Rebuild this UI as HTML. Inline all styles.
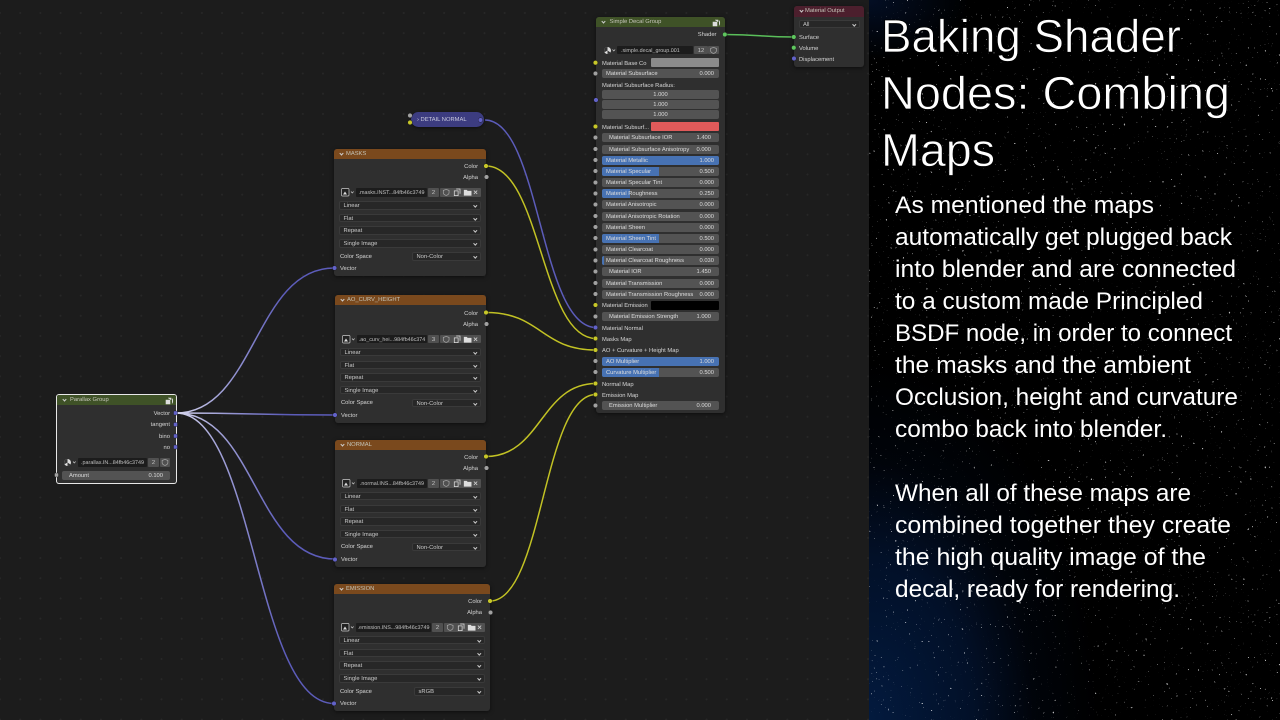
<!DOCTYPE html>
<html><head><meta charset="utf-8"><title>Baking Shader Nodes</title>
<style>
html,body{margin:0;padding:0;background:#1c1c1c}
#page{position:relative;width:1280px;height:720px;overflow:hidden;background-color:#1c1c1c;font-family:"Liberation Sans",sans-serif}
#grid{position:absolute;left:0;top:0;width:869px;height:720px;background-image:radial-gradient(circle at 1px 1px,#272727 0.8px,transparent 1.1px);background-size:20.2px 20.2px;background-position:-1px 12px}
svg.l{position:absolute;left:0;top:0}
#nodes{position:absolute;left:0;top:0;width:869px;height:720px;filter:blur(.35px);text-rendering:geometricPrecision}
.n{position:absolute;background:#2f2f2f;border-radius:3px;box-shadow:0 1px 4px rgba(0,0,0,.55)}
.h{position:absolute;left:0;right:0;top:0;height:10px;border-radius:3px 3px 0 0;color:#c4c4b8;font-size:5.8px;line-height:11px;padding-left:12px;box-sizing:border-box;white-space:nowrap}
.h:before{content:"";position:absolute;left:6px;top:2.6px;width:2px;height:2px;border-right:.8px solid #ccc;border-bottom:.8px solid #ccc;transform:rotate(45deg)}
.g{background:#3f5227}.o{background:#7a491d}.r{background:#4c1f2d}
.t{position:absolute;font-size:5.8px;line-height:12px;height:10px;color:#d4d4d4;white-space:nowrap}
.f{position:absolute;height:9px;background:#535353;border-radius:2px;overflow:hidden;font-size:5.8px;line-height:10.5px;color:#dcdcdc;white-space:nowrap}
.f i{position:absolute;left:0;top:0;bottom:0;background:#4772b3}
.f span{position:absolute;left:4px}
.f b{position:absolute;right:5px;font-weight:normal}
.f.x span{left:7px}.f.x b{right:8px}
.f.c{text-align:center}
.D .f{left:6px;width:117px}
.D .t{left:6px}
.sw{position:absolute;left:55px;width:68px;height:9px;border-radius:1px}
.dd{position:absolute;height:8.6px;background:#272727;border:.6px solid #3a3a3a;box-sizing:border-box;border-radius:2px;font-size:5.8px;line-height:9px;color:#c8c8c8;padding-left:3.5px;white-space:nowrap}
.dd:after{content:"";position:absolute;right:3px;top:2px;width:1.6px;height:1.6px;border-right:.7px solid #ccc;border-bottom:.7px solid #ccc;transform:rotate(45deg)}
.nm{position:absolute;height:8.6px;background:#1c1c1c;border-radius:1px;font-size:5.4px;line-height:10px;color:#c0c0c0;text-align:center;white-space:nowrap;overflow:hidden}
.bt{position:absolute;height:8.6px;background:#505050;border-radius:1px;font-size:5.8px;line-height:10px;color:#c8c8c8;text-align:center}
.bt svg{position:absolute;left:0;top:0;width:100%;height:100%}
</style></head><body>
<div id="page">
<div id="grid"></div>

<svg class="l" width="869" height="720" viewBox="0 0 869 720">
<defs>
<linearGradient id="w1" gradientUnits="userSpaceOnUse" x1="176" y1="0" x2="285" y2="0"><stop offset="0" stop-color="#d8d8ee"/><stop offset=".3" stop-color="#aeaedd"/><stop offset="1" stop-color="#5c5cba"/></linearGradient>
</defs>
<g fill="none" stroke-width="1.5">
<path d="M176 413C255 413 255 268 334 268" stroke="url(#w1)"/>
<path d="M176 413C255 413 255 415 335 415" stroke="url(#w1)"/>
<path d="M176 413C255 413 255 559 335 559" stroke="url(#w1)"/>
<path d="M176 413C255 413 255 703.500 334 703.500" stroke="url(#w1)"/>
<path d="M485 120C540 120 540 327.500 596 327.500" stroke="#5c5cba"/>
<path d="M486 166C541 166 541 338.500 596 338.500" stroke="#c2c224"/>
<path d="M486 312.500C541 312.500 541 350 596 350" stroke="#c2c224"/>
<path d="M486 456.500C541 456.500 541 383.500 596 383.500" stroke="#c2c224"/>
<path d="M490 601C543 601 543 394.500 596 394.500" stroke="#c2c224"/>
<path d="M725 34.500C760 34.500 760 37 794 37" stroke="#5abf5a"/>
</g>
</svg>

<div id="nodes">
<!-- Material Output -->
<div class="n" style="left:794px;top:6px;width:70px;height:60.500px">
<div class="h r" style="padding-left:11px;height:10.500px">Material Output</div>
<div class="dd" style="left:4.500px;top:13.500px;width:61px">All</div>
<div class="t" style="left:5px;top:25.700px">Surface</div>
<div class="t" style="left:5px;top:36.700px">Volume</div>
<div class="t" style="left:5px;top:47.700px">Displacement</div>
</div>

<!-- Simple Decal Group -->
<div class="n D" style="left:596px;top:17px;width:128.500px;height:396px">
<div class="h g" style="padding-left:13.500px">Simple Decal Group</div>
<svg class="l" style="left:116px;top:1.500px" width="9" height="8" viewBox="0 0 9 8"><path d="M1 3h4v4H1zM3 1h3v2M7 1.500c1 1 1 4 0 5" fill="#ddd" stroke="#ddd" stroke-width=".6"/></svg>
<div class="t" style="left:auto;right:8px;top:11.500px">Shader</div>
<svg class="l" style="left:7px;top:28.500px" width="14" height="9" viewBox="0 0 14 9"><circle cx="4.500" cy="4.500" r="3.500" fill="#ddd"/><path d="M4.500 1a3.500 3.500 0 0 0-3 5.200L4.500 4.500zM4.500 4.500l3 2a3.500 3.500 0 0 1-3 1.500z" fill="#333"/><path d="M9.500 3.500l1.300 1.500 1.300-1.500" fill="none" stroke="#ccc" stroke-width=".7"/></svg>
<div class="nm" style="left:21px;top:28.700px;width:76px;text-align:left;padding-left:4px;box-sizing:border-box">.simple.decal_group.001</div>
<div class="bt" style="left:98px;top:28.700px;width:14px">12</div>
<div class="bt" style="left:112px;top:28.700px;width:11px"><svg viewBox="0 0 11 9"><path d="M5.500 1.500l3 1v2.500c0 1.500-2 2.500-3 2.800-1-.3-3-1.300-3-2.800V2.500z" fill="none" stroke="#aaa" stroke-width=".7"/></svg></div>
<div class="t" style="top:40.700px">Material Base Co</div>
<div class="sw" style="top:41.200px;background:#8b8b8b"></div>
<div class="f" style="top:52px"><span>Material Subsurface</span><b>0.000</b></div>
<div class="t" style="top:62.500px">Material Subsurface Radius:</div>
<div class="f c" style="top:73px;height:9px">1.000</div>
<div class="f c" style="top:83px;height:9px">1.000</div>
<div class="f c" style="top:93px;height:9px">1.000</div>
<div class="t" style="top:104.500px">Material Subsurf...</div>
<div class="sw" style="top:105px;background:#e05a5a"></div>
<div class="f x" style="top:116px"><span>Material Subsurface IOR</span><b>1.400</b></div>
<div class="f x" style="top:127.500px"><span>Material Subsurface Anisotropy</span><b>0.000</b></div>
<div class="f" style="top:138.500px"><i style="width:100%"></i><span>Material Metallic</span><b>1.000</b></div>
<div class="f" style="top:149.500px"><i style="width:49%"></i><span>Material Specular</span><b>0.500</b></div>
<div class="f" style="top:161px"><span>Material Specular Tint</span><b>0.000</b></div>
<div class="f" style="top:172px"><i style="width:24%"></i><span>Material Roughness</span><b>0.250</b></div>
<div class="f" style="top:183px"><span>Material Anisotropic</span><b>0.000</b></div>
<div class="f" style="top:194.500px"><span>Material Anisotropic Rotation</span><b>0.000</b></div>
<div class="f" style="top:205.500px"><span>Material Sheen</span><b>0.000</b></div>
<div class="f" style="top:216.500px"><i style="width:49%"></i><span>Material Sheen Tint</span><b>0.500</b></div>
<div class="f" style="top:228px"><span>Material Clearcoat</span><b>0.000</b></div>
<div class="f" style="top:239px"><i style="width:2%"></i><span>Material Clearcoat Roughness</span><b>0.030</b></div>
<div class="f x" style="top:250px"><span>Material IOR</span><b>1.450</b></div>
<div class="f" style="top:261.500px"><span>Material Transmission</span><b>0.000</b></div>
<div class="f" style="top:272.500px"><span>Material Transmission Roughness</span><b>0.000</b></div>
<div class="t" style="top:283px">Material Emission</div>
<div class="sw" style="top:283.500px;background:#000"></div>
<div class="f x" style="top:295px"><span>Material Emission Strength</span><b>1.000</b></div>
<div class="t" style="top:305.500px">Material Normal</div>
<div class="t" style="top:316.500px">Masks Map</div>
<div class="t" style="top:328px">AO + Curvature + Height Map</div>
<div class="f" style="top:339.500px"><i style="width:100%"></i><span>AO Multiplier</span><b>1.000</b></div>
<div class="f" style="top:350.500px"><i style="width:49%"></i><span>Curvature Multiplier</span><b>0.500</b></div>
<div class="t" style="top:361.500px">Normal Map</div>
<div class="t" style="top:372.500px">Emission Map</div>
<div class="f x" style="top:384px"><span>Emission Multiplier</span><b>0.000</b></div>
</div>

<!-- Detail normal -->
<div style="position:absolute;left:411px;top:112px;width:73px;height:15px;background:#3c3c80;border-radius:7.500px;box-shadow:0 1px 3px rgba(0,0,0,.5)"></div>
<div class="t" style="left:417px;top:114.300px;color:#c8c8dc">&#8250;&nbsp;DETAIL NORMAL</div>

<!-- MASKS -->
<div class="n" style="left:334px;top:149px;width:152px;height:127px">
<div class="h o">MASKS</div>
<div class="t" style="right:8px;top:12px">Color</div><div class="t" style="right:8px;top:23px">Alpha</div>
<svg class="l" style="left:7px;top:39px" width="15" height="9" viewBox="0 0 15 9"><rect x=".5" y=".5" width="7.500" height="7.500" rx="1" fill="#222" stroke="#ccc" stroke-width=".7"/><path d="M2 6.500l2-3 2 3z" fill="#ddd"/><path d="M10 3.500l1.300 1.500 1.300-1.500" fill="none" stroke="#ccc" stroke-width=".7"/></svg>
<div class="nm" style="left:22px;right:59px;top:39px">.masks.INST...84fb46c3749</div>
<div class="bt" style="right:47px;width:11px;top:39px">2</div>
<div class="bt" style="right:5px;width:41px;top:39px"><svg viewBox="0 0 41 9"><path d="M5.500 1.500l3 1v2.500c0 1.500-2 2.500-3 2.800-1-.3-3-1.300-3-2.800V2.500z" fill="none" stroke="#aaa" stroke-width=".7"/><path d="M14 3h4v5h-4zM16 1h4v5" fill="none" stroke="#ddd" stroke-width=".8"/><path d="M24 2h3l1 1h4v5h-8z" fill="#ddd"/><path d="M34.500 2.700l3.500 3.500M38 2.700l-3.500 3.500" stroke="#ccc" stroke-width=".8"/></svg></div>
<div class="dd" style="left:5px;right:5px;top:52px">Linear</div>
<div class="dd" style="left:5px;right:5px;top:64.500px">Flat</div>
<div class="dd" style="left:5px;right:5px;top:77px">Repeat</div>
<div class="dd" style="left:5px;right:5px;top:90px">Single Image</div>
<div class="t" style="left:6px;top:102px">Color Space</div>
<div class="dd" style="left:78px;right:5px;top:103px">Non-Color</div>
<div class="t" style="left:6px;top:114px">Vector</div>
</div>

<!-- AO -->
<div class="n" style="left:335px;top:295px;width:151px;height:128px">
<div class="h o">AO_CURV_HEIGHT</div>
<div class="t" style="right:8px;top:12.500px">Color</div><div class="t" style="right:8px;top:24px">Alpha</div>
<svg class="l" style="left:7px;top:39.500px" width="15" height="9" viewBox="0 0 15 9"><rect x=".5" y=".5" width="7.500" height="7.500" rx="1" fill="#222" stroke="#ccc" stroke-width=".7"/><path d="M2 6.500l2-3 2 3z" fill="#ddd"/><path d="M10 3.500l1.300 1.500 1.300-1.500" fill="none" stroke="#ccc" stroke-width=".7"/></svg>
<div class="nm" style="left:22px;right:59px;top:39.500px">.ao_curv_hei...984fb46c374</div>
<div class="bt" style="right:47px;width:11px;top:39.500px">3</div>
<div class="bt" style="right:5px;width:41px;top:39.500px"><svg viewBox="0 0 41 9"><path d="M5.500 1.500l3 1v2.500c0 1.500-2 2.500-3 2.800-1-.3-3-1.300-3-2.800V2.500z" fill="none" stroke="#aaa" stroke-width=".7"/><path d="M14 3h4v5h-4zM16 1h4v5" fill="none" stroke="#ddd" stroke-width=".8"/><path d="M24 2h3l1 1h4v5h-8z" fill="#ddd"/><path d="M34.500 2.700l3.500 3.500M38 2.700l-3.500 3.500" stroke="#ccc" stroke-width=".8"/></svg></div>
<div class="dd" style="left:5px;right:5px;top:52.700px">Linear</div>
<div class="dd" style="left:5px;right:5px;top:65.500px">Flat</div>
<div class="dd" style="left:5px;right:5px;top:78px">Repeat</div>
<div class="dd" style="left:5px;right:5px;top:90.700px">Single Image</div>
<div class="t" style="left:6px;top:102px">Color Space</div>
<div class="dd" style="left:77px;right:5px;top:103.500px">Non-Color</div>
<div class="t" style="left:6px;top:114.500px">Vector</div>
</div>

<!-- NORMAL -->
<div class="n" style="left:335px;top:440px;width:151px;height:127px">
<div class="h o">NORMAL</div>
<div class="t" style="right:8px;top:11.500px">Color</div><div class="t" style="right:8px;top:23px">Alpha</div>
<svg class="l" style="left:7px;top:39px" width="15" height="9" viewBox="0 0 15 9"><rect x=".5" y=".5" width="7.500" height="7.500" rx="1" fill="#222" stroke="#ccc" stroke-width=".7"/><path d="M2 6.500l2-3 2 3z" fill="#ddd"/><path d="M10 3.500l1.300 1.500 1.300-1.500" fill="none" stroke="#ccc" stroke-width=".7"/></svg>
<div class="nm" style="left:22px;right:59px;top:39px">.normal.INS...84fb46c3749</div>
<div class="bt" style="right:47px;width:11px;top:39px">2</div>
<div class="bt" style="right:5px;width:41px;top:39px"><svg viewBox="0 0 41 9"><path d="M5.500 1.500l3 1v2.500c0 1.500-2 2.500-3 2.800-1-.3-3-1.300-3-2.800V2.500z" fill="none" stroke="#aaa" stroke-width=".7"/><path d="M14 3h4v5h-4zM16 1h4v5" fill="none" stroke="#ddd" stroke-width=".8"/><path d="M24 2h3l1 1h4v5h-8z" fill="#ddd"/><path d="M34.500 2.700l3.500 3.500M38 2.700l-3.500 3.500" stroke="#ccc" stroke-width=".8"/></svg></div>
<div class="dd" style="left:5px;right:5px;top:51.700px">Linear</div>
<div class="dd" style="left:5px;right:5px;top:64.500px">Flat</div>
<div class="dd" style="left:5px;right:5px;top:77px">Repeat</div>
<div class="dd" style="left:5px;right:5px;top:89.700px">Single Image</div>
<div class="t" style="left:6px;top:101px">Color Space</div>
<div class="dd" style="left:77px;right:5px;top:102.500px">Non-Color</div>
<div class="t" style="left:6px;top:114px">Vector</div>
</div>

<!-- EMISSION -->
<div class="n" style="left:334px;top:584px;width:156px;height:127px">
<div class="h o">EMISSION</div>
<div class="t" style="right:8px;top:12px">Color</div><div class="t" style="right:8px;top:23px">Alpha</div>
<svg class="l" style="left:7px;top:39px" width="15" height="9" viewBox="0 0 15 9"><rect x=".5" y=".5" width="7.500" height="7.500" rx="1" fill="#222" stroke="#ccc" stroke-width=".7"/><path d="M2 6.500l2-3 2 3z" fill="#ddd"/><path d="M10 3.500l1.300 1.500 1.300-1.500" fill="none" stroke="#ccc" stroke-width=".7"/></svg>
<div class="nm" style="left:22px;right:59px;top:39px">.emission.INS...984fb46c3749</div>
<div class="bt" style="right:47px;width:11px;top:39px">2</div>
<div class="bt" style="right:5px;width:41px;top:39px"><svg viewBox="0 0 41 9"><path d="M5.500 1.500l3 1v2.500c0 1.500-2 2.500-3 2.800-1-.3-3-1.300-3-2.800V2.500z" fill="none" stroke="#aaa" stroke-width=".7"/><path d="M14 3h4v5h-4zM16 1h4v5" fill="none" stroke="#ddd" stroke-width=".8"/><path d="M24 2h3l1 1h4v5h-8z" fill="#ddd"/><path d="M34.500 2.700l3.500 3.500M38 2.700l-3.500 3.500" stroke="#ccc" stroke-width=".8"/></svg></div>
<div class="dd" style="left:5px;right:5px;top:51.700px">Linear</div>
<div class="dd" style="left:5px;right:5px;top:64.500px">Flat</div>
<div class="dd" style="left:5px;right:5px;top:77px">Repeat</div>
<div class="dd" style="left:5px;right:5px;top:90px">Single Image</div>
<div class="t" style="left:6px;top:102px">Color Space</div>
<div class="dd" style="left:80px;right:5px;top:103px">sRGB</div>
<div class="t" style="left:6px;top:114px">Vector</div>
</div>

<!-- Parallax -->
<div class="n" style="left:57px;top:395px;width:118.500px;height:87.500px;box-shadow:0 0 0 1px #e8e8e8;border-radius:2px">
<div class="h g" style="padding-left:13px;border-radius:2px 2px 0 0">Parallax Group</div>
<svg class="l" style="left:108px;top:1.500px" width="9" height="8" viewBox="0 0 9 8"><path d="M1 3h4v4H1zM3 1h3v2M7 1.500c1 1 1 4 0 5" fill="#ddd" stroke="#ddd" stroke-width=".6"/></svg>
<div class="t" style="right:5.500px;top:12.500px">Vector</div>
<div class="t" style="right:5.500px;top:24px">tangent</div>
<div class="t" style="right:5.500px;top:35.500px">bino</div>
<div class="t" style="right:5.500px;top:46.500px">no</div>
<svg class="l" style="left:6px;top:63px" width="15" height="9" viewBox="0 0 15 9"><circle cx="4.500" cy="4.500" r="3.500" fill="#ddd"/><path d="M4.500 1a3.500 3.500 0 0 0-3 5.200L4.500 4.500zM4.500 4.500l3 2a3.500 3.500 0 0 1-3 1.500z" fill="#333"/><path d="M10 3.500l1.300 1.500 1.300-1.500" fill="none" stroke="#ccc" stroke-width=".7"/></svg>
<div class="nm" style="left:21px;width:69px;top:63.300px">.parallax.IN...84fb46c3749</div>
<div class="bt" style="left:91px;width:11px;top:63.300px">2</div>
<div class="bt" style="left:103px;width:10px;top:63.300px"><svg viewBox="0 0 10 9"><path d="M5 1.500l3 1v2.500c0 1.500-2 2.500-3 2.800-1-.3-3-1.300-3-2.800V2.500z" fill="none" stroke="#aaa" stroke-width=".7"/></svg></div>
<div class="f" style="left:5px;width:108px;top:75.500px"><span style="left:7px">Amount</span><b style="right:7px">0.100</b></div>
</div>
</div>

<!-- sockets -->
<svg class="l" width="869" height="720" viewBox="0 0 869 720">
<g fill="#6262c8" stroke="#141414" stroke-width=".4">
<circle cx="334.500" cy="268" r="2.300"/><circle cx="335" cy="415" r="2.300"/><circle cx="335" cy="559.500" r="2.300"/><circle cx="334" cy="703.500" r="2.300"/>
<circle cx="480.500" cy="120" r="2.300"/><circle cx="596" cy="100" r="2.300"/><circle cx="595.500" cy="327.500" r="2.300"/><circle cx="794" cy="58.500" r="2.300"/>
<rect x="173.500" y="411" width="4" height="4" rx=".8"/><rect x="173.500" y="422.500" width="4" height="4" rx=".8"/><rect x="173.500" y="434" width="4" height="4" rx=".8"/><rect x="173.500" y="445" width="4" height="4" rx=".8"/>
</g>
<g fill="#c7c729" stroke="#141414" stroke-width=".4">
<circle cx="410" cy="122.500" r="2.300"/><circle cx="486" cy="166" r="2.300"/><circle cx="486" cy="312.500" r="2.300"/><circle cx="486" cy="456.500" r="2.300"/><circle cx="490" cy="601" r="2.300"/>
<circle cx="595.500" cy="62.700" r="2.300"/><circle cx="595.500" cy="126.500" r="2.300"/><circle cx="595.500" cy="305" r="2.300"/><circle cx="595.500" cy="338.500" r="2.300"/><circle cx="595.500" cy="350" r="2.300"/><circle cx="595.500" cy="383.500" r="2.300"/><circle cx="595.500" cy="394.500" r="2.300"/>
</g>
<g fill="#a1a1a1" stroke="#141414" stroke-width=".4">
<circle cx="410" cy="115.500" r="2.300"/><circle cx="486.500" cy="177" r="2.300"/><circle cx="486.500" cy="324" r="2.300"/><circle cx="486.500" cy="468" r="2.300"/><circle cx="490.500" cy="612.500" r="2.300"/>
<rect x="54.500" y="473" width="4" height="4" rx="1"/>
<circle cx="595.500" cy="73.500" r="2.300"/><circle cx="595.500" cy="137.500" r="2.300"/><circle cx="595.500" cy="149" r="2.300"/><circle cx="595.500" cy="160" r="2.300"/><circle cx="595.500" cy="171" r="2.300"/><circle cx="595.500" cy="182.500" r="2.300"/><circle cx="595.500" cy="193.500" r="2.300"/><circle cx="595.500" cy="204.500" r="2.300"/><circle cx="595.500" cy="216" r="2.300"/><circle cx="595.500" cy="227" r="2.300"/><circle cx="595.500" cy="238" r="2.300"/><circle cx="595.500" cy="249.500" r="2.300"/><circle cx="595.500" cy="260.500" r="2.300"/><circle cx="595.500" cy="271.500" r="2.300"/><circle cx="595.500" cy="283" r="2.300"/><circle cx="595.500" cy="294" r="2.300"/><circle cx="595.500" cy="316.500" r="2.300"/><circle cx="595.500" cy="361" r="2.300"/><circle cx="595.500" cy="372" r="2.300"/><circle cx="595.500" cy="405.500" r="2.300"/>
</g>
<g fill="#5fc75f" stroke="#141414" stroke-width=".4"><circle cx="724.800" cy="34.500" r="2.300"/><circle cx="793.800" cy="37" r="2.300"/><circle cx="793.800" cy="47.700" r="2.300"/></g>
</svg>

<!-- right panel -->
<div style="position:absolute;left:869px;top:0;width:411px;height:720px;background:radial-gradient(ellipse 230px 360px at 0 100%,#031a3e 0%,#021028 45%,rgba(1,6,16,.6) 72%,rgba(0,0,0,0) 100%),radial-gradient(ellipse 100px 60px at 0 0,#030e24 0%,rgba(0,0,0,0) 100%),#000"></div>
<svg class="l" style="left:869px" width="411" height="720" viewBox="0 0 411 720">
<filter id="st" x="0" y="0" width="100%" height="100%" color-interpolation-filters="sRGB">
<feTurbulence type="fractalNoise" baseFrequency=".42" numOctaves="2" seed="7"/>
<feColorMatrix values="0 0 0 0 1  0 0 0 0 1  0 0 0 0 1  14 0 0 0 -10.500"/>
<feGaussianBlur stdDeviation=".3"/>
</filter>
<rect width="411" height="720" filter="url(#st)" opacity=".72"/>
</svg>
<svg class="l" width="1280" height="720" viewBox="0 0 1280 720" fill="#fff" font-family="'Liberation Sans',sans-serif">
<g font-size="46" stroke="#000" stroke-width=".7">
<text x="881" y="52" textLength="300" lengthAdjust="spacingAndGlyphs">Baking Shader</text>
<text x="881" y="109" textLength="349" lengthAdjust="spacingAndGlyphs">Nodes: Combing</text>
<text x="881" y="166" textLength="114" lengthAdjust="spacingAndGlyphs">Maps</text>
</g>
<g font-size="24">
<text x="895" y="213" textLength="259" lengthAdjust="spacingAndGlyphs">As mentioned the maps</text>
<text x="895" y="245" textLength="337" lengthAdjust="spacingAndGlyphs">automatically get plugged back</text>
<text x="895" y="277" textLength="341" lengthAdjust="spacingAndGlyphs">into blender and are connected</text>
<text x="895" y="309" textLength="308" lengthAdjust="spacingAndGlyphs">to a custom made Principled</text>
<text x="895" y="341" textLength="337" lengthAdjust="spacingAndGlyphs">BSDF node, in order to connect</text>
<text x="895" y="373" textLength="296" lengthAdjust="spacingAndGlyphs">the masks and the ambient</text>
<text x="895" y="405" textLength="343" lengthAdjust="spacingAndGlyphs">Occlusion, height and curvature</text>
<text x="895" y="437" textLength="272" lengthAdjust="spacingAndGlyphs">combo back into blender.</text>
<text x="895" y="501" textLength="296" lengthAdjust="spacingAndGlyphs">When all of these maps are</text>
<text x="895" y="533" textLength="336" lengthAdjust="spacingAndGlyphs">combined together they create</text>
<text x="895" y="565" textLength="311" lengthAdjust="spacingAndGlyphs">the high quality image of the</text>
<text x="895" y="597" textLength="285" lengthAdjust="spacingAndGlyphs">decal, ready for rendering.</text>
</g>
</svg>
</div>
</body></html>
